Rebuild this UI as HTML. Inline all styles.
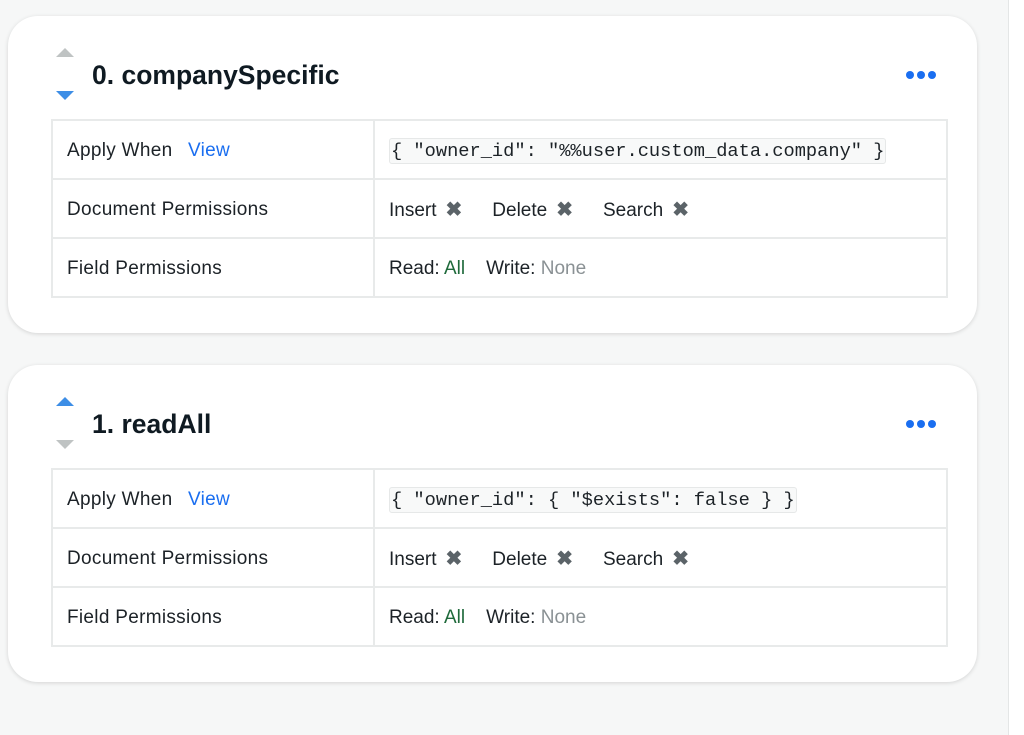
<!DOCTYPE html>
<html><head><style>
body{margin:0;width:1024px;height:735px;background:#f6f7f7;font-family:"Liberation Sans",sans-serif;position:relative;overflow:hidden;color:#1c2227}
.side{position:absolute;left:1008px;top:0;width:16px;height:735px;background:#fff;border-left:1px solid #e4e6e6}
.card{position:absolute;left:8px;width:969px;height:317px;background:#fff;border-radius:30px;box-shadow:0 1px 4px rgba(0,0,0,.14)}
.title{position:absolute;left:84px;top:44px;font-size:26.5px;font-weight:bold;color:#0f1a22}
.up,.dn{position:absolute;left:48px;width:0;height:0;border-left:9px solid transparent;border-right:9px solid transparent}
.up{border-bottom:9px solid #bfc3c3}.dn{border-top:9px solid #bfc3c3}
.up.b{border-bottom-color:#3d8ee6}.dn.b{border-top-color:#3d8ee6}
.dots{position:absolute;left:898px;top:50px;}
.dots i{display:inline-block;width:8px;height:8px;border-radius:50%;background:#1a6ef0;margin-right:3px}
table{position:absolute;left:43px;top:103px;width:897px;border-collapse:collapse;font-size:19px}
td{border:2px solid #e8eaea;height:55px;padding:2px 0 0 14px}
td.l{width:306px;letter-spacing:0.3px}
.v{color:#1a6ef0;margin-left:10px}
code{font-family:"Liberation Mono",monospace;font-size:18.7px;background:#f8f9f9;border:1px solid #e6e8e8;border-radius:3px;padding:1px 1px}
.x{color:#5b6368;font-weight:bold;margin:0 30px 0 9px;font-size:20px}
.g{color:#1f6a3b}.n{color:#8a9194}
</style></head><body>
<div class="side"></div>
<div class="card" style="top:16px">
 <div class="up" style="top:32px"></div><div class="dn b" style="top:75px"></div>
 <div class="title">0. companySpecific</div>
 <div class="dots"><i></i><i></i><i></i></div>
 <table>
 <tr><td class="l">Apply When <span class="v">View</span></td><td><code>{ "owner_id": "%%user.custom_data.company" }</code></td></tr>
 <tr><td class="l">Document Permissions</td><td>Insert<span class="x">✖</span>Delete<span class="x">✖</span>Search<span class="x">✖</span></td></tr>
 <tr><td class="l">Field Permissions</td><td>Read: <span class="g">All</span>&nbsp;&nbsp;&nbsp; Write: <span class="n">None</span></td></tr>
 </table>
</div>
<div class="card" style="top:365px">
 <div class="up b" style="top:32px"></div><div class="dn" style="top:75px"></div>
 <div class="title">1. readAll</div>
 <div class="dots"><i></i><i></i><i></i></div>
 <table>
 <tr><td class="l">Apply When <span class="v">View</span></td><td><code>{ "owner_id": { "$exists": false } }</code></td></tr>
 <tr><td class="l">Document Permissions</td><td>Insert<span class="x">✖</span>Delete<span class="x">✖</span>Search<span class="x">✖</span></td></tr>
 <tr><td class="l">Field Permissions</td><td>Read: <span class="g">All</span>&nbsp;&nbsp;&nbsp; Write: <span class="n">None</span></td></tr>
 </table>
</div>
</body></html>
